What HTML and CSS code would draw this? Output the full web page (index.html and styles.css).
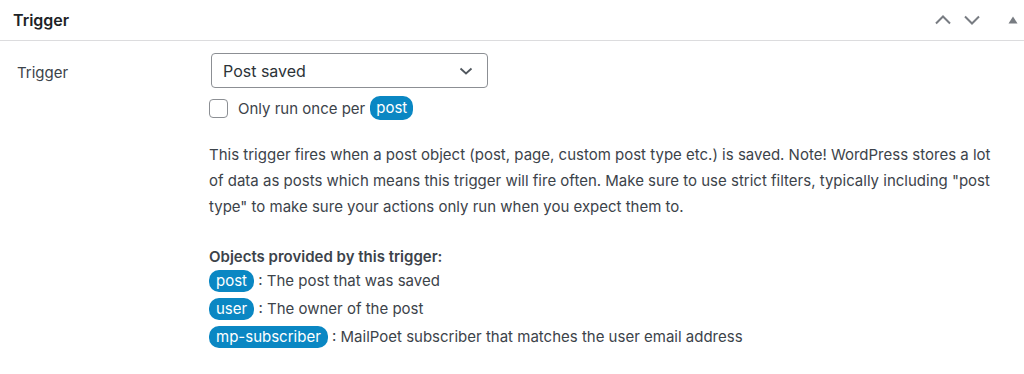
FILE: index.html
```html
<!DOCTYPE html>
<html>

<head>
    <title>Trigger</title>
    <meta charset="utf-8">
    <link rel="stylesheet" href="styles.css">
</head>

<body>

    <section class="postbox">
        <header class="postbox-header">
            <h2>Trigger</h2>
            <div class="handle-actions">
                <button class="handle" aria-label="Move up">
                    <svg width="18" height="18" viewBox="0 0 18 18"><path d="M2 12.5 L9 5.5 L16 12.5" /></svg>
                </button>
                <button class="handle" aria-label="Move down">
                    <svg width="18" height="18" viewBox="0 0 18 18"><path d="M2 5.5 L9 12.5 L16 5.5" /></svg>
                </button>
                <button class="handle toggle" aria-label="Toggle panel">
                    <svg width="12" height="10" viewBox="0 0 12 10"><polygon points="6,1.5 10.5,8.5 1.5,8.5" /></svg>
                </button>
            </div>
        </header>

        <div class="inside">
            <div class="row">
                <label class="label" for="trigger">Trigger</label>
                <div class="field">
                    <div class="select" id="trigger">
                        <span>Post saved</span>
                        <svg width="16" height="16" viewBox="0 0 16 16"><path d="M2.5 5.5 L8 10.5 L13.5 5.5" /></svg>
                    </div>

                    <label class="once">
                        <span class="checkbox"></span>
                        Only run once per <span class="tag">post</span>
                    </label>

                    <p class="description">This trigger fires when a post object (post, page, custom post type etc.) is saved. Note! WordPress stores a lot of data as posts which means this trigger will fire often. Make sure to use strict filters, typically including "post type" to make sure your actions only run when you expect them to.</p>

                    <div class="objects">
                        <p class="objects-title">Objects provided by this trigger:</p>
                        <p><span class="tag">post</span> : The post that was saved</p>
                        <p><span class="tag">user</span> : The owner of the post</p>
                        <p><span class="tag">mp-subscriber</span> : MailPoet subscriber that matches the user email address</p>
                    </div>
                </div>
            </div>
        </div>
    </section>

</body>

</html>
```

FILE: styles.css
```css
html {
    margin: 0;
    padding: 0;
    background-color: #ffffff;
}

body {
    margin: 0;
    font-family: 'Inter', 'Liberation Sans', sans-serif;
    color: #3c434a;
}

.postbox-header {
    display: flex;
    justify-content: space-between;
    align-items: center;
    height: 40px;
    border-bottom: 1px solid #dcdcde;
    padding-left: 13px;
}

.postbox-header h2 {
    margin: 0;
    font-size: 16px;
    font-weight: 600;
    color: #1d2327;
}

.handle-actions {
    display: flex;
    align-items: center;
    height: 100%;
}

.handle {
    background: transparent;
    border: none;
    padding: 0;
    width: 29px;
    height: 36px;
    display: flex;
    align-items: center;
    justify-content: center;
}

.handle svg path {
    fill: none;
    stroke: #787c82;
    stroke-width: 2;
}

.handle.toggle {
    width: 38px;
    padding-left: 16px;
}

.handle svg polygon {
    fill: #787c82;
}

.inside {
    padding: 12px 0 0 17px;
}

.row {
    display: grid;
    grid-template-columns: 192px 1fr;
}

.label {
    font-size: 15px;
    padding-top: 10px;
    color: #3c434a;
}

.field {
    padding-right: 20px;
}

.select {
    box-sizing: border-box;
    width: 277px;
    height: 35px;
    border: 1px solid #8c8f94;
    border-radius: 4px;
    display: flex;
    align-items: center;
    justify-content: space-between;
    padding: 0 13px 0 11px;
    font-size: 16px;
    color: #2c3338;
    margin-left: 2px;
}

.select svg path {
    fill: none;
    stroke: #50575e;
    stroke-width: 1.8;
}

.once {
    display: flex;
    align-items: center;
    gap: 5px;
    margin-top: 8px;
    font-size: 15px;
}

.checkbox {
    box-sizing: border-box;
    width: 19px;
    height: 19px;
    border: 1px solid #8c8f94;
    border-radius: 4px;
    margin-right: 5px;
}

.tag {
    display: inline-block;
    background-color: #0a87c3;
    color: #ffffff;
    border-radius: 10px;
    padding: 2px 7px;
    line-height: 18px;
    font-size: 15px;
}

.once .tag {
    padding: 3px 6px;
}

.description {
    margin: 22px 0 0;
    font-size: 15px;
    line-height: 26px;
}

.objects {
    margin-top: 26px;
}

.objects p {
    margin: 0 0 6px;
    font-size: 15px;
    line-height: 22px;
}

.objects p.objects-title {
    font-weight: 600;
    margin-bottom: 2px;
}
```
